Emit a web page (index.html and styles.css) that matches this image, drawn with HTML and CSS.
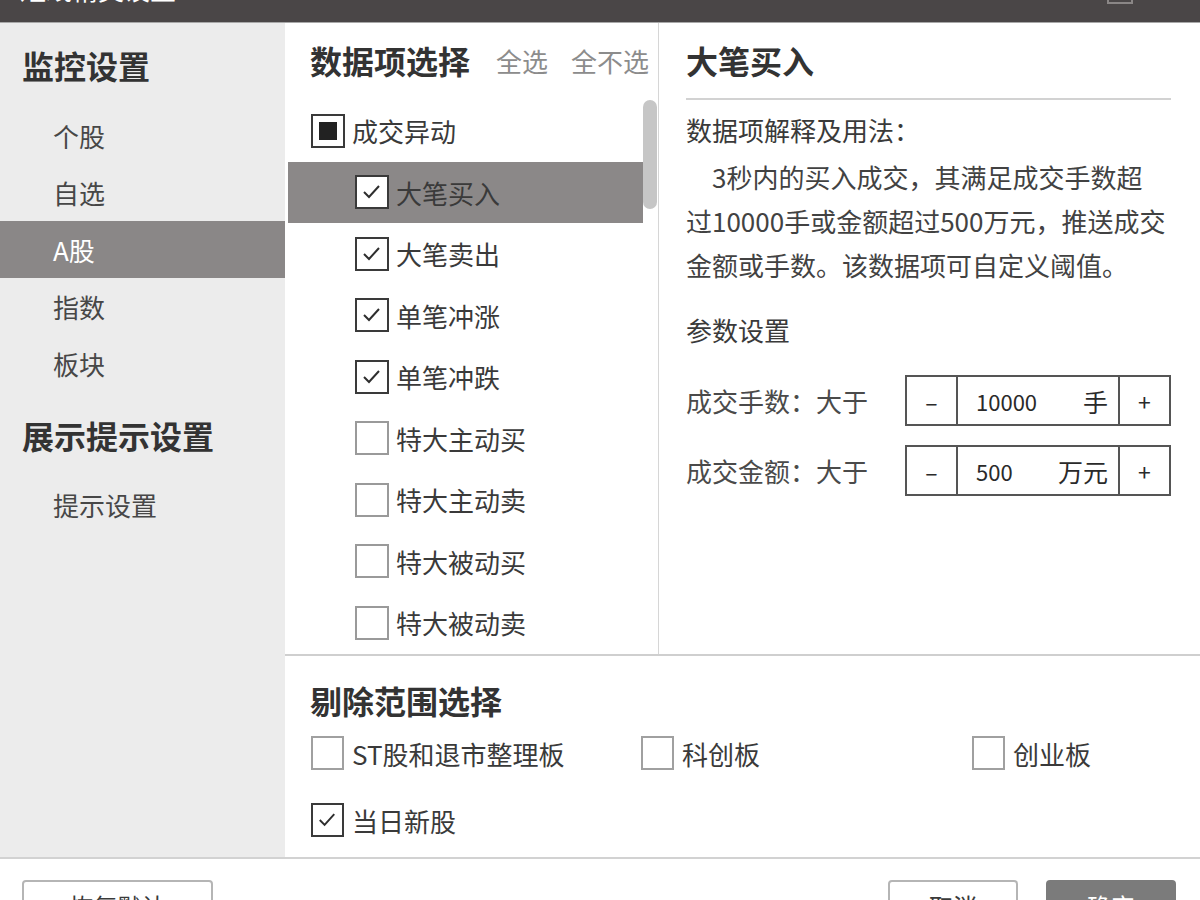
FILE: index.html
```html
<!DOCTYPE html>
<html lang="zh-CN">
<head>
    <meta charset="utf-8">
    <meta name="viewport" content="width=device-width, initial-scale=1.0">
    <title>短线精灵设置</title>
    <link rel="stylesheet" href="styles.css">
</head>
<body>
    <div class="dialog">
        <div class="title_bar">
            <span class="title">短线精灵设置</span>
            <span class="close_btn"></span>
        </div>

        <div class="main">
            <!-- 左侧菜单 -->
            <div class="side">
                <div class="side_head">监控设置</div>
                <div class="side_item">个股</div>
                <div class="side_item">自选</div>
                <div class="side_item active">A股</div>
                <div class="side_item">指数</div>
                <div class="side_item">板块</div>
                <div class="side_head second">展示提示设置</div>
                <div class="side_item">提示设置</div>
            </div>

            <div class="content">
                <div class="top">
                    <!-- 数据项选择 -->
                    <div class="pick">
                        <div class="pick_head">
                            <span class="heading">数据项选择</span>
                            <span class="link">全选</span>
                            <span class="link">全不选</span>
                        </div>
                        <div class="pick_body">
                            <ul class="items">
                                <li class="item"><span class="box part"></span>成交异动</li>
                                <li class="item sub selected"><span class="box on"><svg viewBox="0 0 30 30"><polyline points="7,15 12,20 22,9"/></svg></span>大笔买入</li>
                                <li class="item sub"><span class="box on"><svg viewBox="0 0 30 30"><polyline points="7,15 12,20 22,9"/></svg></span>大笔卖出</li>
                                <li class="item sub"><span class="box on"><svg viewBox="0 0 30 30"><polyline points="7,15 12,20 22,9"/></svg></span>单笔冲涨</li>
                                <li class="item sub"><span class="box on"><svg viewBox="0 0 30 30"><polyline points="7,15 12,20 22,9"/></svg></span>单笔冲跌</li>
                                <li class="item sub"><span class="box"></span>特大主动买</li>
                                <li class="item sub"><span class="box"></span>特大主动卖</li>
                                <li class="item sub"><span class="box"></span>特大被动买</li>
                                <li class="item sub"><span class="box"></span>特大被动卖</li>
                            </ul>
                            <div class="scroll"><div class="thumb"></div></div>
                        </div>
                    </div>

                    <!-- 数据项说明 -->
                    <div class="detail">
                        <div class="detail_title">大笔买入</div>
                        <div class="explain_label">数据项解释及用法：</div>
                        <p class="explain">3秒内的买入成交，其满足成交手数超<br>过10000手或金额超过500万元，推送成交<br>金额或手数。该数据项可自定义阈值。</p>
                        <div class="param_title">参数设置</div>
                        <div class="param_row">
                            <span class="param_label">成交手数：大于</span>
                            <div class="spinner">
                                <span class="minus">–</span>
                                <span class="value"><span>10000</span><span class="unit">手</span></span>
                                <span class="plus">+</span>
                            </div>
                        </div>
                        <div class="param_row">
                            <span class="param_label">成交金额：大于</span>
                            <div class="spinner">
                                <span class="minus">–</span>
                                <span class="value"><span>500</span><span class="unit">万元</span></span>
                                <span class="plus">+</span>
                            </div>
                        </div>
                    </div>
                </div>

                <!-- 剔除范围选择 -->
                <div class="exclude">
                    <div class="heading">剔除范围选择</div>
                    <div class="exclude_grid">
                        <label class="opt"><span class="box light"></span>ST股和退市整理板</label>
                        <label class="opt"><span class="box light"></span>科创板</label>
                        <label class="opt"><span class="box light"></span>创业板</label>
                        <label class="opt"><span class="box on"><svg viewBox="0 0 30 30"><polyline points="7,15 12,20 22,9"/></svg></span>当日新股</label>
                    </div>
                </div>
            </div>
        </div>

        <div class="footer">
            <button class="btn">恢复默认</button>
            <div class="footer_right">
                <button class="btn small">取消</button>
                <button class="btn small primary">确定</button>
            </div>
        </div>
    </div>
</body>
</html>
```

FILE: styles.css
```css
body {
    margin: 0;
    overflow: hidden;
    font-family: "Noto Sans CJK SC", "Noto Sans", sans-serif;
    color: #3a3a3a;
    background-color: #ffffff;
}
.dialog {
    width: 1200px;
    height: 900px;
    overflow: hidden;
}
.title_bar {
    height: 22px;
    background-color: #4a4647;
    border-bottom: 1px solid #a8a8a8;
    display: flex;
    justify-content: space-between;
    align-items: flex-start;
    padding-left: 20px;
    overflow: hidden;
}
.title {
    color: #ffffff;
    font-size: 26px;
    line-height: 26px;
    margin-top: -24px;
}
.close_btn {
    width: 26px;
    height: 26px;
    box-sizing: border-box;
    border: 2px solid #8a8686;
    margin-top: -22px;
    margin-right: 67px;
}
.main {
    display: flex;
    height: 834px;
}

/* 左侧菜单 */
.side {
    width: 285px;
    flex-shrink: 0;
    background-color: #ececec;
    padding-top: 22px;
    box-sizing: border-box;
}
.side_head {
    font-size: 32px;
    font-weight: 700;
    line-height: 40px;
    padding-left: 22px;
    margin-bottom: 22px;
    color: #333333;
}
.side_head.second {
    margin-top: 23px;
    margin-bottom: 21px;
}
.side_item {
    height: 57px;
    line-height: 57px;
    padding-left: 53px;
    font-size: 26px;
    color: #474747;
}
.side_item.active {
    background-color: #8a8787;
    color: #ffffff;
}

.content {
    flex: 1;
    display: flex;
    flex-direction: column;
}
.top {
    display: flex;
    height: 631px;
}

/* 数据项选择 */
.pick {
    width: 374px;
    flex-shrink: 0;
    border-right: 1px solid #d6d6d6;
    box-sizing: border-box;
    padding-top: 17px;
}
.pick_head {
    display: flex;
    align-items: center;
    height: 40px;
    padding-left: 25px;
    white-space: nowrap;
}
.heading {
    font-size: 32px;
    font-weight: 700;
    line-height: 40px;
    color: #333333;
}
.link {
    font-size: 26px;
    color: #8c8c8c;
    margin-left: 26px;
}
.link + .link {
    margin-left: 23px;
}
.pick_body {
    display: flex;
    margin-top: 20px;
    padding-left: 3px;
    height: 554px;
    overflow: hidden;
}
.items {
    list-style: none;
    margin: 0;
    padding: 0;
    width: 355px;
}
.item {
    height: 61.5px;
    display: flex;
    align-items: center;
    padding-left: 23px;
    font-size: 26px;
    color: #3a3a3a;
}
.item.sub {
    padding-left: 67px;
}
.item.selected {
    background-color: #8b8888;
}
.scroll {
    width: 14px;
}
.thumb {
    height: 109px;
    background-color: #c6c6c6;
    border-radius: 7px;
}

.box {
    width: 34px;
    height: 34px;
    box-sizing: border-box;
    border: 2px solid #3a3a3a;
    background-color: #ffffff;
    margin-right: 7px;
    flex-shrink: 0;
    display: flex;
    align-items: center;
    justify-content: center;
}
.item .box:not(.on):not(.part) {
    border-color: #9a9a9a;
}
.box.light {
    border-color: #a0a0a0;
}
.box.part::after {
    content: "";
    width: 18px;
    height: 18px;
    background-color: #222222;
}
.box svg {
    width: 30px;
    height: 30px;
    fill: none;
    stroke: #2e2e2e;
    stroke-width: 2;
}

/* 数据项说明 */
.detail {
    flex: 1;
    padding: 17px 34px 0 27px;
}
.detail_title {
    font-size: 32px;
    font-weight: 700;
    line-height: 40px;
    padding-bottom: 18px;
    border-bottom: 2px solid #d2d2d2;
    color: #333333;
}
.explain_label {
    margin-top: 10px;
    font-size: 26px;
    line-height: 40px;
}
.explain {
    margin: 5px 0 0;
    font-size: 26px;
    line-height: 44px;
    text-indent: 1em;
    color: #424242;
    white-space: nowrap;
}
.param_title {
    margin-top: 23px;
    font-size: 26px;
    line-height: 40px;
}
.param_row {
    display: flex;
    align-items: center;
    margin-top: 19px;
}
.param_title + .param_row {
    margin-top: 25px;
}
.param_label {
    width: 219px;
    flex-shrink: 0;
    font-size: 26px;
    color: #4a4a4a;
}
.spinner {
    width: 266px;
    height: 51px;
    flex-shrink: 0;
    box-sizing: border-box;
    border: 2px solid #555555;
    display: flex;
    font-size: 23px;
    color: #2a2a2a;
}
.minus, .plus {
    width: 49px;
    display: flex;
    align-items: center;
    justify-content: center;
}
.minus {
    border-right: 2px solid #555555;
}
.plus {
    border-left: 2px solid #555555;
}
.value {
    flex: 1;
    display: flex;
    align-items: center;
    justify-content: space-between;
    padding: 0 10px 0 18px;
    font-size: 22px;
}
.unit {
    font-size: 25px;
}

/* 剔除范围选择 */
.exclude {
    flex: 1;
    border-top: 2px solid #cfcfcf;
    padding: 24px 0 0 25px;
}
.exclude_grid {
    display: grid;
    grid-template-columns: 330px 331px 1fr;
    grid-auto-rows: 40px;
    row-gap: 27px;
    margin-top: 13px;
}
.opt {
    display: flex;
    align-items: center;
    font-size: 26px;
    color: #3a3a3a;
    padding-left: 1px;
}
.opt .box {
    width: 33px;
    margin-right: 8px;
}

/* 底部按钮 */
.footer {
    border-top: 2px solid #d2d2d2;
    display: flex;
    justify-content: space-between;
    padding: 21px 24px 0 22px;
}
.footer_right {
    display: flex;
    gap: 28px;
}
.btn {
    width: 191px;
    height: 50px;
    border: 2px solid #b5b5b5;
    border-radius: 4px;
    background-color: #ffffff;
    font-family: "Noto Sans CJK SC", "Noto Sans", sans-serif;
    font-size: 24px;
    color: #3a3a3a;
}
.btn.small {
    width: 130px;
}
.btn.primary {
    background-color: #7b7b7b;
    border-color: #7b7b7b;
    color: #ffffff;
}
```
